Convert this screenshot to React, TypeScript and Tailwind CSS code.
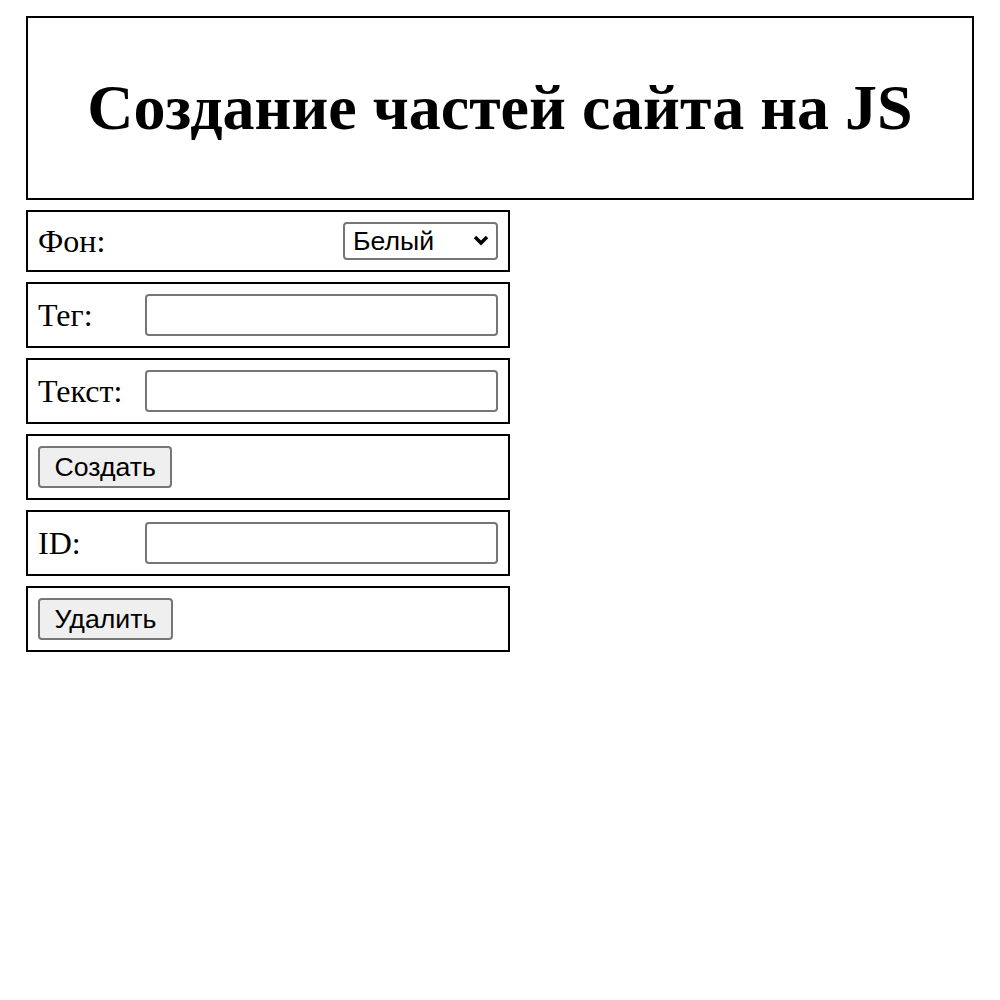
import React from "react";

function Row({ children }: { children: React.ReactNode }) {
  return (
    <div className="flex items-center justify-between border-2 border-black p-[10px] w-[484px]">
      {children}
    </div>
  );
}

function Label({ children }: { children: React.ReactNode }) {
  return (
    <span className="font-['Liberation_Serif','Times_New_Roman',serif] text-[32px] leading-[37px] text-black">
      {children}
    </span>
  );
}

function TextInput() {
  return (
    <input
      type="text"
      className="w-[353px] h-[42px] border-2 border-[#767676] rounded-[4px] bg-white px-2 font-['Liberation_Sans',Arial,sans-serif] text-[26.67px] outline-none"
    />
  );
}

function Btn({ children }: { children: React.ReactNode }) {
  return (
    <button className="h-[42px] px-[14.5px] border-2 border-[#767676] rounded-[4px] bg-[#efefef] font-['Liberation_Sans',Arial,sans-serif] text-[26.67px] leading-[30px] text-black">
      {children}
    </button>
  );
}

export default function App() {
  return (
    <div className="bg-white min-h-[1000px] pt-[16px] px-[26px] flex flex-col gap-[10px] font-['Liberation_Serif','Times_New_Roman',serif]">
      <div className="h-[184px] border-2 border-black flex items-center justify-center">
        <h1 className="font-['Liberation_Serif','Times_New_Roman',serif] text-[64px] font-bold leading-[74px] text-black">
          Создание частей сайта на JS
        </h1>
      </div>

      <Row>
        <Label>Фон:</Label>
        <div className="relative w-[155px] h-[38px]">
          <select
            className="appearance-none w-full h-full border-2 border-[#767676] rounded-[4px] bg-white pl-[8px] pr-[30px] font-['Liberation_Sans',Arial,sans-serif] text-[26.67px] leading-[30px] text-black outline-none"
            defaultValue="white"
          >
            <option value="white">Белый</option>
            <option value="black">Черный</option>
          </select>
          <svg
            className="pointer-events-none absolute right-[9px] top-[13px]"
            width="16"
            height="11"
            viewBox="0 0 16 11"
          >
            <path d="M2 2 L8 8 L14 2" fill="none" stroke="black" strokeWidth="3.5" />
          </svg>
        </div>
      </Row>

      <Row>
        <Label>Тег:</Label>
        <TextInput />
      </Row>

      <Row>
        <Label>Текст:</Label>
        <TextInput />
      </Row>

      <Row>
        <Btn>Создать</Btn>
      </Row>

      <Row>
        <Label>ID:</Label>
        <TextInput />
      </Row>

      <Row>
        <Btn>Удалить</Btn>
      </Row>
    </div>
  );
}
